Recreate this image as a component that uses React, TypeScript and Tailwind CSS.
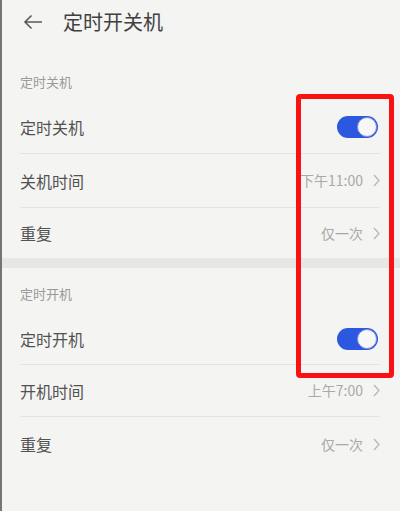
import React from "react";

type Row = { label: string; value?: string; toggle?: boolean };

const Chevron = () => (
  <svg width="7" height="13" viewBox="0 0 7 13" className="ml-[10px]">
    <path d="M1 1 L6 6.5 L1 12" fill="none" stroke="#b8b8b6" strokeWidth="1.3" />
  </svg>
);

const Toggle = () => (
  <div className="relative w-[41px] h-[22px] rounded-full bg-[#2c57e0]">
    <div className="absolute right-[1px] top-[1px] w-[20px] h-[20px] rounded-full bg-[#f6f6fb] border border-[#7d8fd8]" />
  </div>
);

function SettingRow({ row, last, h }: { row: Row; last?: boolean; h: string }) {
  return (
    <div className={`ml-[18px] mr-5 flex items-center justify-between ${h} ${last ? "" : "border-b border-[#e4e4e2]"}`}>
      <span className="text-[16px] text-[#525252]">{row.label}</span>
      {row.toggle ? (
        <div className="mr-[2px]">
          <Toggle />
        </div>
      ) : (
        <div className="flex items-center">
          <span className="text-[14px] text-[#a9a9a7]">{row.value}</span>
          <Chevron />
        </div>
      )}
    </div>
  );
}

export default function App() {
  const off: Row[] = [
    { label: "定时关机", toggle: true },
    { label: "关机时间", value: "下午11:00" },
    { label: "重复", value: "仅一次" },
  ];
  const on: Row[] = [
    { label: "定时开机", toggle: true },
    { label: "开机时间", value: "上午7:00" },
    { label: "重复", value: "仅一次" },
  ];
  return (
    <div
      className="relative w-[400px] h-[511px] overflow-hidden bg-[#f4f4f2] border-l-2 border-[#777472]"
      style={{ fontFamily: '"Noto Sans CJK SC", "Noto Sans", sans-serif' }}
    >
      {/* top bar */}
      <div className="h-[44px] flex items-center pl-[21px]">
        <svg width="20" height="16" viewBox="0 0 20 16">
          <path d="M19 8 H2 M8.5 1.5 L2 8 L8.5 14.5" fill="none" stroke="#5a5a5a" strokeWidth="1.6" />
        </svg>
        <span className="ml-[20px] text-[20px] text-[#3f3f3f]">定时开关机</span>
      </div>

      {/* scheduled power off */}
      <div className="h-[57px] flex items-end pb-[10px] pl-[18px]">
        <span className="text-[13px] text-[#9a9a98]">定时关机</span>
      </div>
      <SettingRow row={off[0]} h="h-[53px]" />
      <SettingRow row={off[1]} h="h-[54px]" />
      <SettingRow row={off[2]} h="h-[50px]" last />

      <div className="h-[10px] bg-[#e7e7e5]" />

      {/* scheduled power on */}
      <div className="h-[45px] flex items-end pb-[10px] pl-[18px]">
        <span className="text-[13px] text-[#9a9a98]">定时开机</span>
      </div>
      <SettingRow row={on[0]} h="h-[52px]" />
      <SettingRow row={on[1]} h="h-[52px]" />
      <SettingRow row={on[2]} h="h-[54px]" last />

      {/* highlight frame over the toggle column */}
      <div className="absolute left-[294px] top-[94px] w-[98px] h-[284px] border-[5px] border-[#fa1212] rounded-[4px]" />
    </div>
  );
}
